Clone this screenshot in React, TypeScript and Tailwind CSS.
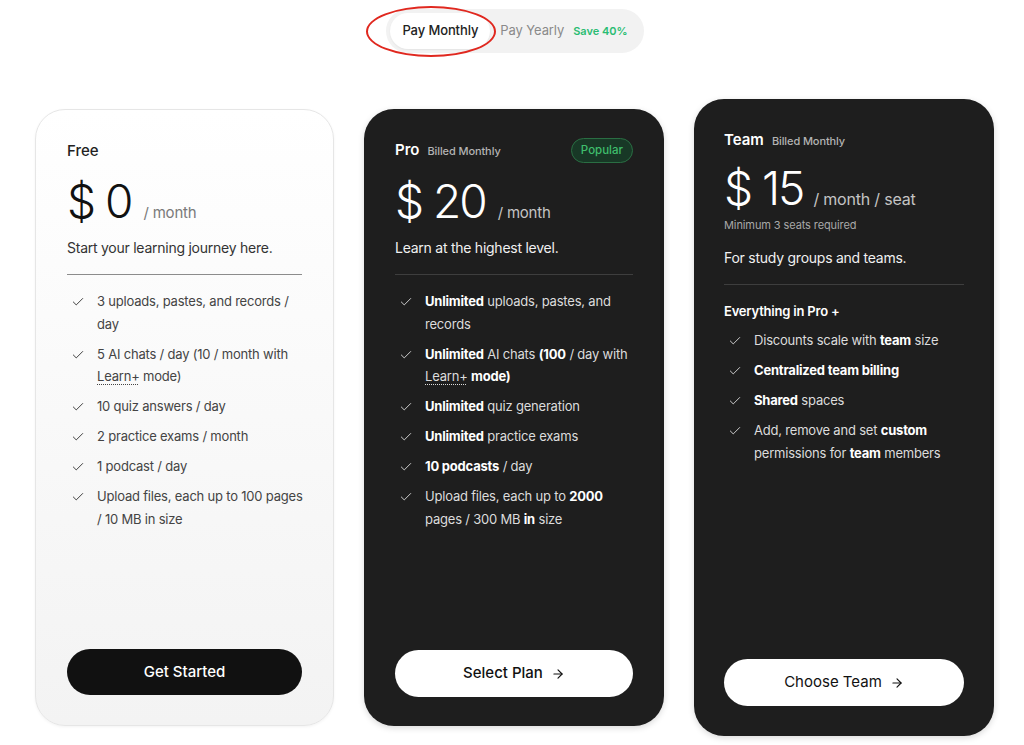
import { Check, ArrowRight } from 'lucide-react'
import type { ReactNode } from 'react'

const font = { fontFamily: 'Inter, "Noto Sans", sans-serif' }

const Feature = ({ children, dark }: { children: ReactNode; dark?: boolean }) => (
  <li className="flex items-start gap-[12px]">
    <Check
      size={14}
      strokeWidth={1.6}
      className={`mt-[5px] ml-[4px] shrink-0 ${dark ? 'text-[#d8d8d8]' : 'text-[#333]'}`}
    />
    <span className="leading-[22.5px]">{children}</span>
  </li>
)

const Learn = () => <span className="underline decoration-dotted decoration-[1px] underline-offset-[3px]">Learn+</span>

export default function App() {
  return (
    <div className="relative h-[745px] w-[1024px] overflow-hidden bg-white text-[#1a1a1a]" style={font}>
      {/* billing toggle */}
      <div className="flex justify-center pt-[9px] pl-[6px]">
        <div className="relative flex h-[44px] items-center rounded-full bg-[#f2f2f2] p-[4px] pr-[16px]">
          <div className="flex h-[36px] items-center rounded-full bg-white px-[12px] text-[13px] font-medium tracking-[-0.1px] text-[#222] shadow-[0_1px_2px_rgba(0,0,0,0.06)]">
            Pay Monthly
          </div>
          <span className="ml-[10px] text-[13px] tracking-[-0.1px] text-[#8a8a8a]">Pay Yearly</span>
          <span className="ml-[9px] text-[11px] font-semibold text-[#2bbd73]">Save 40%</span>
          <div className="pointer-events-none absolute top-[-3px] left-[-20px] h-[51px] w-[130px] rounded-[50%] border-2 border-[#e0281f]" />
        </div>
      </div>

      {/* plans */}
      <div className="mt-[46px] flex items-start gap-[30px] pl-[35px]">
        {/* Free */}
        <div className="mt-[10px] flex h-[617px] w-[299px] flex-col rounded-[30px] border border-[#e6e6e6] bg-gradient-to-b from-white to-[#f3f3f3] px-[31px] pt-[31px] pb-[30px] shadow-[0_1px_3px_rgba(0,0,0,0.05)]">
          <div className="text-[15px] leading-[20px] font-medium text-[#222]">Free</div>
          <div className="mt-[16px] flex items-baseline">
            <span className="text-[46px] leading-[48px] font-light tracking-[-2px] text-[#111]">$ 0</span>
            <span className="ml-[12px] text-[15px] tracking-[-0.2px] text-[#7a7a7a]">/ month</span>
          </div>
          <p className="mt-[13px] text-[14px] leading-[20px] tracking-[-0.25px] text-[#333]">Start your learning journey here.</p>
          <div className="mt-[16px] h-px bg-[#8c8c8c]" />
          <ul className="mt-[15px] mr-[-8px] flex flex-col gap-[7.5px] text-[13px] tracking-[-0.2px] text-[#444]">
            <Feature>3 uploads, pastes, and records / day</Feature>
            <Feature>
              5 AI chats / day (10 / month with <Learn /> mode)
            </Feature>
            <Feature>10 quiz answers / day</Feature>
            <Feature>2 practice exams / month</Feature>
            <Feature>1 podcast / day</Feature>
            <Feature>Upload files, each up to 100 pages / 10 MB in size</Feature>
          </ul>
          <button className="mt-auto h-[46px] w-full rounded-full bg-[#111] text-[15px] font-medium text-white">
            Get Started
          </button>
        </div>

        {/* Pro */}
        <div className="mt-[10px] flex h-[617px] w-[300px] flex-col rounded-[30px] bg-[#1e1e1e] px-[31px] pt-[29px] pb-[29px] text-white shadow-[0_2px_6px_rgba(0,0,0,0.15)]">
          <div className="flex items-center justify-between">
            <div className="flex items-baseline gap-[8px]">
              <span className="text-[15px] font-semibold">Pro</span>
              <span className="text-[11px] font-medium tracking-[-0.1px] text-[#b3b3b3]">Billed Monthly</span>
            </div>
            <span className="flex h-[25px] items-center rounded-full border border-[#2a6e43] bg-[#183826] px-[9px] text-[11.5px] font-medium text-[#3fbe6c]">
              Popular
            </span>
          </div>
          <div className="mt-[14px] flex items-baseline">
            <span className="text-[46px] leading-[48px] font-light tracking-[-2px]">$ 20</span>
            <span className="ml-[12px] text-[15px] tracking-[-0.2px] text-[#c4c4c4]">/ month</span>
          </div>
          <p className="mt-[13px] text-[14px] leading-[20px] tracking-[-0.25px] text-[#f0f0f0]">Learn at the highest level.</p>
          <div className="mt-[16px] h-px bg-[#3e3e3e]" />
          <ul className="mt-[15px] flex flex-col gap-[7.5px] text-[13px] tracking-[-0.2px] text-[#dcdcdc]">
            <Feature dark>
              <b className="text-white">Unlimited</b> uploads, pastes, and records
            </Feature>
            <Feature dark>
              <b className="text-white">Unlimited</b> AI chats <b className="text-white">(100</b> / day with <Learn />{' '}
              <b className="text-white">mode)</b>
            </Feature>
            <Feature dark>
              <b className="text-white">Unlimited</b> quiz generation
            </Feature>
            <Feature dark>
              <b className="text-white">Unlimited</b> practice exams
            </Feature>
            <Feature dark>
              <b className="text-white">10 podcasts</b> / day
            </Feature>
            <Feature dark>
              Upload files, each up to <b className="text-white">2000</b> pages / 300 MB <b className="text-white">in</b> size
            </Feature>
          </ul>
          <button className="mt-auto flex h-[47px] w-full items-center justify-center gap-[8px] rounded-full bg-white text-[15px] font-medium text-[#111]">
            Select Plan <ArrowRight size={14} strokeWidth={2} />
          </button>
        </div>

        {/* Team */}
        <div className="flex h-[637px] w-[300px] flex-col rounded-[30px] bg-[#1e1e1e] px-[30px] pt-[31px] pb-[30px] text-white shadow-[0_2px_6px_rgba(0,0,0,0.15)]">
          <div className="flex items-baseline gap-[8px]">
            <span className="text-[15px] leading-[20px] font-semibold">Team</span>
            <span className="text-[11px] font-medium tracking-[-0.1px] text-[#b3b3b3]">Billed Monthly</span>
          </div>
          <div className="mt-[14px] flex items-baseline">
            <span className="text-[46px] leading-[48px] font-light tracking-[-2px]">$ 15</span>
            <span className="ml-[10px] text-[16px] tracking-[-0.2px] text-[#c4c4c4]">/ month / seat</span>
          </div>
          <p className="mt-[5px] text-[11px] tracking-[-0.1px] text-[#a8a8a8]">Minimum 3 seats required</p>
          <p className="mt-[14px] text-[14px] leading-[20px] tracking-[-0.25px] text-[#f0f0f0]">For study groups and teams.</p>
          <div className="mt-[16px] h-px bg-[#3e3e3e]" />
          <p className="mt-[17px] text-[13px] font-semibold tracking-[-0.2px] text-white">Everything in Pro +</p>
          <ul className="mt-[8px] flex flex-col gap-[7.5px] text-[13px] tracking-[-0.2px] text-[#dcdcdc]">
            <Feature dark>
              Discounts scale with <b className="text-white">team</b> size
            </Feature>
            <Feature dark>
              <b className="text-white">Centralized team billing</b>
            </Feature>
            <Feature dark>
              <b className="text-white">Shared</b> spaces
            </Feature>
            <Feature dark>
              Add, remove and set <b className="text-white">custom</b> permissions for <b className="text-white">team</b> members
            </Feature>
          </ul>
          <button className="mt-auto flex h-[47px] w-full items-center justify-center gap-[8px] rounded-full bg-white text-[15px] text-[#111]">
            Choose Team <ArrowRight size={14} strokeWidth={2} />
          </button>
        </div>
      </div>
    </div>
  )
}
